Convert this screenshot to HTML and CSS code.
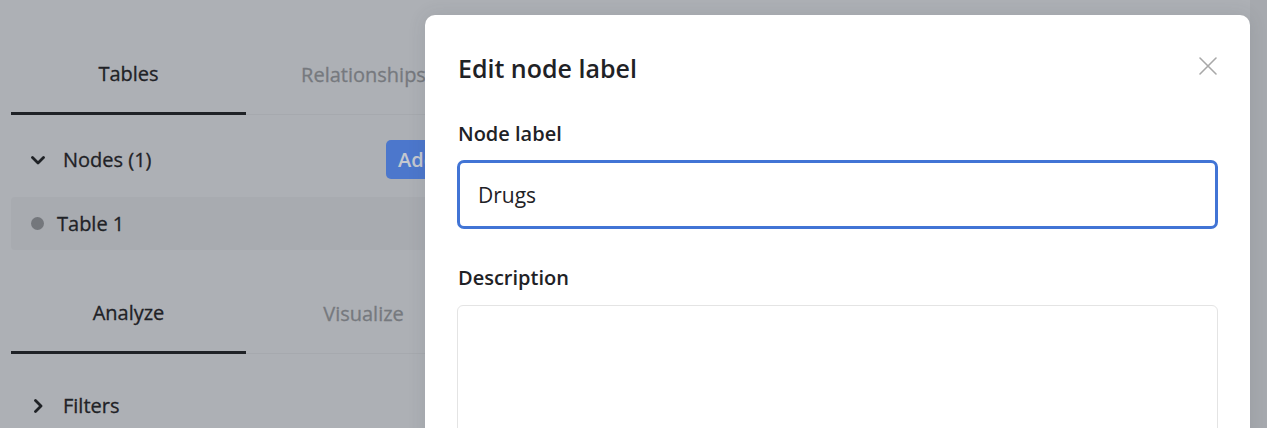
FILE: index.html
```html
<!DOCTYPE html>
<html>
<head>
<meta charset="utf-8">
<link rel="stylesheet" href="styles.css">
</head>
<body>
<div class="screen">
  <div class="app">
    <aside class="panel">
      <div class="tabs">
        <div class="tab active">Tables</div>
        <div class="tab">Relationships</div>
      </div>
      <div class="section-row">
        <div class="section-title">
          <svg class="chev" width="14" height="14" viewBox="0 0 14 14"><path d="M1.5 4.5 L7 10 L12.5 4.5" fill="none" stroke="#1f2226" stroke-width="2.8" stroke-linecap="round" stroke-linejoin="round"/></svg>
          <span>Nodes (1)</span>
        </div>
        <button class="add-btn">Add</button>
      </div>
      <div class="item-row">
        <span class="dot"></span>
        <span>Table 1</span>
      </div>
      <div class="tabs tabs-second">
        <div class="tab active">Analyze</div>
        <div class="tab">Visualize</div>
      </div>
      <div class="section-row filters">
        <div class="section-title">
          <svg class="chev" width="14" height="14" viewBox="0 0 14 14"><path d="M4.5 1.5 L10 7 L4.5 12.5" fill="none" stroke="#1f2226" stroke-width="2.8" stroke-linecap="round" stroke-linejoin="round"/></svg>
          <span>Filters</span>
        </div>
      </div>
    </aside>
    <div class="canvas"></div>
    <div class="edge"></div>
  </div>
  <div class="modal">
    <div class="modal-header">
      <h5 class="modal-title">Edit node label</h5>
      <svg class="close" width="20" height="20" viewBox="0 0 20 20"><path d="M2 2 L18 18 M18 2 L2 18" stroke="#a8a8a8" stroke-width="1.6" stroke-linecap="round"/></svg>
    </div>
    <div class="modal-body">
      <label class="form-label">Node label</label>
      <div class="input">Drugs</div>
      <label class="form-label desc">Description</label>
      <div class="textarea"></div>
    </div>
  </div>
</div>
</body>
</html>
```
FILE: styles.css
```css
* { box-sizing: border-box; }
html, body { margin: 0; padding: 0; background: #ffffff; }
body { font-family: "Open Sans", "Noto Sans", sans-serif; color: #1f2226; }

.screen {
  position: relative;
  width: 1267px;
  height: 428px;
  overflow: hidden;
  background: #adb0b5;
}

.app {
  display: flex;
  height: 100%;
}

.panel {
  width: 481px;
  padding: 37px 0 0 11px;
  flex: none;
}

.canvas { flex: 1; }

.edge {
  width: 17px;
  flex: none;
  background: #a6a9ae;
}

.tabs {
  display: flex;
  border-bottom: 1px solid #a6a9ae;
}

.tab {
  width: 235px;
  height: 78px;
  display: flex;
  align-items: center;
  justify-content: center;
  font-size: 20px;
  color: #76797e;
  -webkit-text-stroke: 0.3px currentColor;
  border-bottom: 2px solid transparent;
  margin-bottom: -1px;
  padding-bottom: 2px;
}

.tab.active {
  color: #1f2226;
  border-bottom: 3px solid #1f2226;
}

.section-row {
  display: flex;
  align-items: center;
  justify-content: space-between;
  margin-top: 25px;
  height: 39px;
  padding-left: 20px;
}

.section-title {
  display: flex;
  align-items: center;
  gap: 18px;
  font-size: 20px;
  color: #1f2226;
  -webkit-text-stroke: 0.3px currentColor;
}

.add-btn {
  width: 95px;
  height: 39px;
  border: none;
  border-radius: 5px;
  background: #4c77cc;
  color: #c4c8cf;
  font-family: inherit;
  font-size: 20px;
  font-weight: 600;
  text-align: left;
  padding-left: 12px;
}

.item-row {
  display: flex;
  align-items: center;
  gap: 13px;
  margin-top: 18px;
  height: 53px;
  padding-left: 20px;
  background: #a8abb0;
  border-radius: 4px;
  font-size: 20px;
  color: #1f2226;
  -webkit-text-stroke: 0.3px currentColor;
}

.dot {
  width: 13px;
  height: 13px;
  border-radius: 50%;
  background: #74777c;
}

.tabs-second { margin-top: 26px; }

.filters { margin-top: 32px; }

.modal {
  position: absolute;
  left: 425px;
  top: 15px;
  width: 825px;
  height: 440px;
  background: #ffffff;
  border-radius: 10px;
  box-shadow: 0 0 18px rgba(60, 64, 70, 0.12);
  padding: 0 32px 0 32px;
}

.modal-header {
  display: flex;
  align-items: center;
  justify-content: space-between;
  padding-top: 37px;
  height: 69px;
}

.modal-title {
  margin: 0 0 0 1px;
  font-size: 25px;
  font-weight: 600;
  line-height: 32px;
  color: #1f2226;
}

.close { margin-top: -4px; }

.modal-body {
  display: flex;
  flex-direction: column;
}

.form-label {
  display: block;
  margin-top: 35px;
  margin-left: 1px;
  font-size: 20px;
  font-weight: 600;
  line-height: 30px;
  color: #1f2226;
}

.input {
  margin-top: 11px;
  width: 761px;
  height: 69px;
  border: 3px solid #4174d5;
  border-radius: 7px;
  padding-left: 18px;
  display: flex;
  align-items: center;
  font-size: 21px;
  color: #1f2226;
}

.form-label.desc { margin-top: 34px; }

.textarea {
  margin-top: 12px;
  width: 761px;
  height: 200px;
  border: 1px solid #e4e4e4;
  border-radius: 6px;
}
```
